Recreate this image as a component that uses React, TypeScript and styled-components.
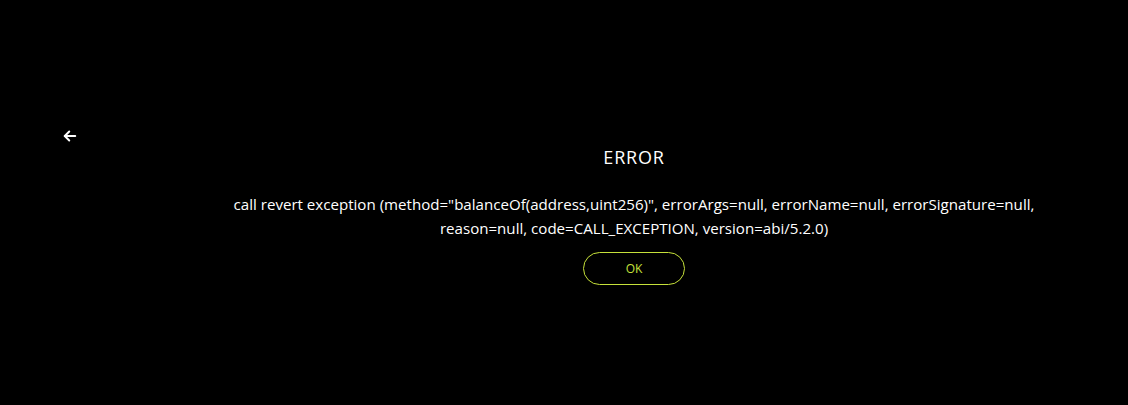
import React from "react";
import styled, { createGlobalStyle } from "styled-components";

const Global = createGlobalStyle`
  html, body { margin: 0; padding: 0; background: #000; }
  body { font-family: "Open Sans", Roboto, sans-serif; color: #fff; }
`;

const Page = styled.div`
  width: 1128px;
  height: 405px;
  background: #000;
  display: flex;
`;

const Side = styled.div`
  width: 140px;
  flex: none;
  padding: 127px 0 0 61px;
  box-sizing: border-box;
`;

const BackButton = styled.button`
  background: none;
  border: none;
  padding: 0;
  color: #fff;
  cursor: pointer;
  display: flex;
  width: 18px;
  height: 18px;
`;

const Main = styled.div`
  flex: 1;
  display: flex;
  flex-direction: column;
  align-items: center;
  padding-top: 144px;
`;

const Title = styled.h2`
  margin: 0;
  font-size: 18px;
  font-weight: 400;
  line-height: 26px;
  letter-spacing: 0.8px;
`;

const Message = styled.p`
  margin: 22px 0 0;
  max-width: 830px;
  text-align: center;
  font-size: 15.1px;
  line-height: 24px;
`;

const OkButton = styled.button`
  margin-top: 12px;
  width: 102px;
  height: 33px;
  border-radius: 17px;
  border: 1.6px solid #c6e13a;
  background: transparent;
  color: #c6e13a;
  font-family: "Open Sans", sans-serif;
  font-size: 12px;
  cursor: pointer;
`;

export default function App() {
  return (
    <>
      <Global />
      <Page>
        <Side>
          <BackButton aria-label="Back">
            <svg width="18" height="18" viewBox="0 0 24 24" fill="none" stroke="currentColor" strokeWidth="2.6" strokeLinecap="round" strokeLinejoin="round">
              <path d="M19 12H5" />
              <path d="M11 6l-6 6 6 6" />
            </svg>
          </BackButton>
        </Side>
        <Main>
          <Title>ERROR</Title>
          <Message>
            call revert exception (method="balanceOf(address,uint256)", errorArgs=null, errorName=null, errorSignature=null, reason=null, code=CALL_EXCEPTION, version=abi/5.2.0)
          </Message>
          <OkButton>OK</OkButton>
        </Main>
      </Page>
    </>
  );
}
